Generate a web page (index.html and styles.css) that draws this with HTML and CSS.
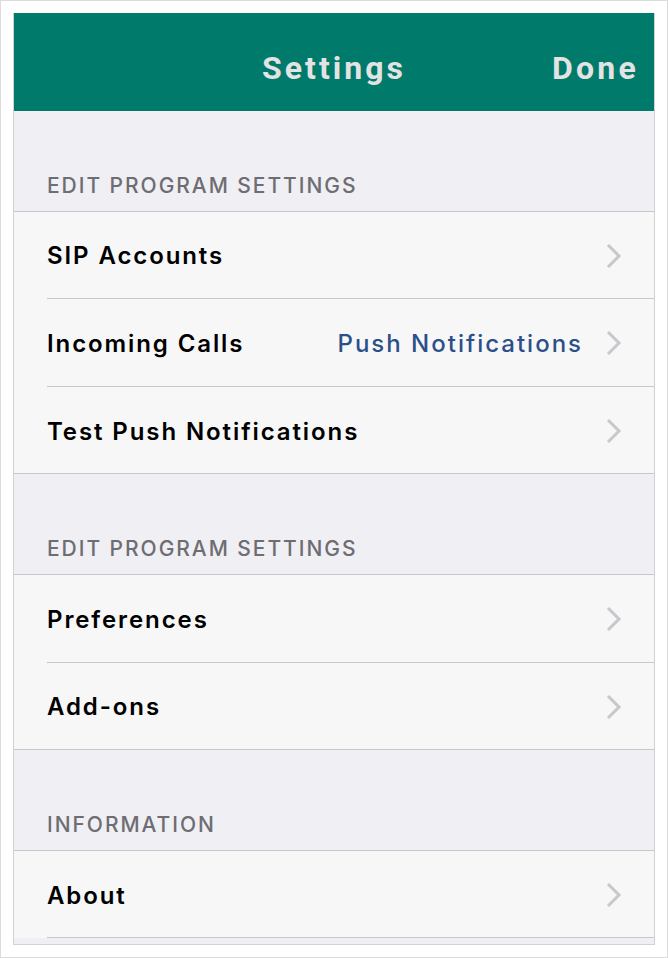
FILE: index.html
```html
<!DOCTYPE html>
<html lang="en">
<head>
    <meta charset="UTF-8">
    <meta name="viewport" content="width=device-width, initial-scale=1.0">
    <title>Settings</title>
    <link rel="stylesheet" href="styles.css">
</head>
<body>
    <div class="frame">
        <div class="panel">
            <div class="navbar">
                <span class="nav-title">Settings</span>
                <span class="nav-done">Done</span>
            </div>

            <div class="section-header">EDIT PROGRAM SETTINGS</div>
            <div class="group">
                <div class="row">
                    <span class="row-label">SIP Accounts</span>
                    <span class="chevron"><svg width="16" height="26" viewBox="0 0 16 26"><path d="M2 2 L13 13 L2 24" fill="none" stroke="#c7c7cc" stroke-width="3"/></svg></span>
                </div>
                <div class="row">
                    <span class="row-label">Incoming Calls</span>
                    <span class="row-value">Push Notifications</span>
                    <span class="chevron"><svg width="16" height="26" viewBox="0 0 16 26"><path d="M2 2 L13 13 L2 24" fill="none" stroke="#c7c7cc" stroke-width="3"/></svg></span>
                </div>
                <div class="row">
                    <span class="row-label">Test Push Notifications</span>
                    <span class="chevron"><svg width="16" height="26" viewBox="0 0 16 26"><path d="M2 2 L13 13 L2 24" fill="none" stroke="#c7c7cc" stroke-width="3"/></svg></span>
                </div>
            </div>

            <div class="section-header">EDIT PROGRAM SETTINGS</div>
            <div class="group">
                <div class="row">
                    <span class="row-label">Preferences</span>
                    <span class="chevron"><svg width="16" height="26" viewBox="0 0 16 26"><path d="M2 2 L13 13 L2 24" fill="none" stroke="#c7c7cc" stroke-width="3"/></svg></span>
                </div>
                <div class="row">
                    <span class="row-label">Add-ons</span>
                    <span class="chevron"><svg width="16" height="26" viewBox="0 0 16 26"><path d="M2 2 L13 13 L2 24" fill="none" stroke="#c7c7cc" stroke-width="3"/></svg></span>
                </div>
            </div>

            <div class="section-header">INFORMATION</div>
            <div class="group group-open">
                <div class="row">
                    <span class="row-label">About</span>
                    <span class="chevron"><svg width="16" height="26" viewBox="0 0 16 26"><path d="M2 2 L13 13 L2 24" fill="none" stroke="#c7c7cc" stroke-width="3"/></svg></span>
                </div>
            </div>
        </div>
    </div>
</body>
</html>
```

FILE: styles.css
```css
* {
    box-sizing: border-box;
}
body {
    margin: 0;
    background: #ffffff;
    font-family: Inter, "Noto Sans", sans-serif;
}
.frame {
    width: 668px;
    height: 958px;
    border: 1px solid #dcdcdc;
    padding: 12px;
}
.panel {
    height: 932px;
    border: 1px solid #d2d2d2;
    border-top: none;
    background: #efeff4;
    overflow: hidden;
}
.navbar {
    height: 98px;
    background: #007a6a;
    display: flex;
    align-items: center;
    justify-content: flex-end;
    position: relative;
    padding: 0 15px 12px 0;
}
.nav-title {
    position: absolute;
    left: 0;
    right: 0;
    top: 36px;
    text-align: center;
    font-family: Roboto, sans-serif;
    font-weight: 700;
    font-size: 32px;
    letter-spacing: 3px;
    color: #e3e3e3;
}
.nav-done {
    font-family: Roboto, sans-serif;
    font-weight: 700;
    font-size: 32px;
    letter-spacing: 3.2px;
    color: #e3e3e3;
    margin-top: 24px;
}
.section-header {
    height: 100.5px;
    display: flex;
    align-items: flex-end;
    padding: 0 0 13px 33px;
    font-size: 21px;
    font-weight: 450;
    color: #6d6d72;
    letter-spacing: 1.95px;
    border-bottom: 1px solid #c8c7cc;
}
.group {
    background: #f7f7f7;
    border-bottom: 1px solid #c8c7cc;
}
.group-open {
    border-bottom: none;
}
.row {
    height: 87.67px;
    margin-left: 33px;
    padding: 2px 32px 0 0;
    display: flex;
    align-items: center;
    border-bottom: 1px solid #c8c7cc;
}
.group .row:last-child {
    height: 86.67px;
    margin-left: 0;
    padding-left: 33px;
    border-bottom: none;
}
.group-open .row:last-child {
    height: 87.67px;
    margin-left: 33px;
    padding-left: 0;
    border-bottom: 1px solid #c8c7cc;
}
.row-label {
    flex: 1;
    font-size: 24px;
    font-weight: 600;
    letter-spacing: 1.9px;
    color: #000000;
}
.row-value {
    font-size: 24px;
    font-weight: 500;
    letter-spacing: 2px;
    color: #2c4f8a;
    margin-right: 23px;
}
.chevron {
    display: flex;
    align-items: center;
}
```
